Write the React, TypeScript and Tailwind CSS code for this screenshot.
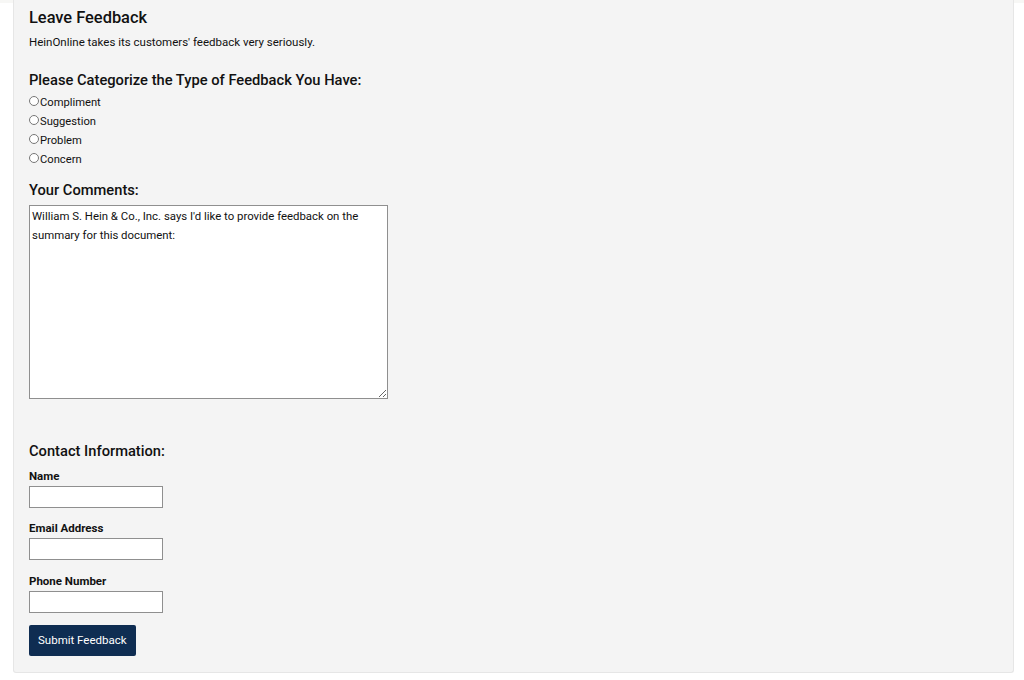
import React, { useState } from 'react';

const categories = ['Compliment', 'Suggestion', 'Problem', 'Concern'];

const ContactField: React.FC<{ label: string; id: string; className?: string }> = ({ label, id, className = '' }) => (
  <div className={`flex flex-col ${className}`}>
    <label htmlFor={id} className="text-[11.5px] font-bold leading-[14px] text-[#111]">
      {label}
    </label>
    <input
      id={id}
      type="text"
      className="mt-[3px] h-[22px] w-[134px] border border-[#8f8f8f] bg-white px-1 text-[12px] outline-none"
    />
  </div>
);

export default function App() {
  const [type, setType] = useState<string>('');

  return (
    <div
      className="min-h-[680px] bg-white"
      style={{ fontFamily: 'Roboto, "Liberation Sans", Arial, sans-serif' }}
    >
      <div className="h-[3px] w-full bg-[#f7f7f5]" />
      <div className="ml-[13px] mr-[10px] mt-[-3px] h-[673px] rounded-b-[3px] border border-t-0 border-[#e6e6e6] bg-[#f4f4f4] px-[15px] pt-[7px] text-[#111]">
        <h1 className="text-[16.4px] font-medium leading-[22px]">Leave Feedback</h1>
        <p className="mt-[5px] text-[11.5px] leading-[16px]">
          HeinOnline takes its customers' feedback very seriously.
        </p>

        <h2 className="mt-[20px] text-[14.7px] font-medium leading-[20px]">
          Please Categorize the Type of Feedback You Have:
        </h2>
        <div className="mt-[3px] flex flex-col">
          {categories.map((c) => (
            <label key={c} className="flex h-[19px] items-center gap-[1px] text-[11.2px] leading-[19px]">
              <input
                type="radio"
                name="type"
                checked={type === c}
                onChange={() => setType(c)}
                className="m-0 mb-[3px] h-[10px] w-[10px]"
              />
              {c}
            </label>
          ))}
        </div>

        <h2 className="mt-[11px] text-[14.7px] font-medium leading-[20px]">Your Comments:</h2>
        <textarea
          className="mt-[5px] block h-[194px] w-[359px] border border-[#8f8f8f] bg-white px-[2px] py-[1px] text-[11.4px] leading-[19px] text-[#111] outline-none"
          defaultValue="William S. Hein & Co., Inc. says I'd like to provide feedback on the summary for this document:"
        />

        <h2 className="mt-[42px] text-[14.7px] font-medium leading-[20px]">Contact Information:</h2>
        <div className="mt-[8px] flex flex-col gap-[12.5px]">
          <ContactField label="Name" id="name" />
          <ContactField label="Email Address" id="email" />
          <ContactField label="Phone Number" id="phone" className="mt-[2px]" />
        </div>

        <button className="mt-[12px] h-[31px] rounded-[2px] bg-[#0f2d52] px-[9px] text-[11.5px] text-white">
          Submit Feedback
        </button>
      </div>
    </div>
  );
}
